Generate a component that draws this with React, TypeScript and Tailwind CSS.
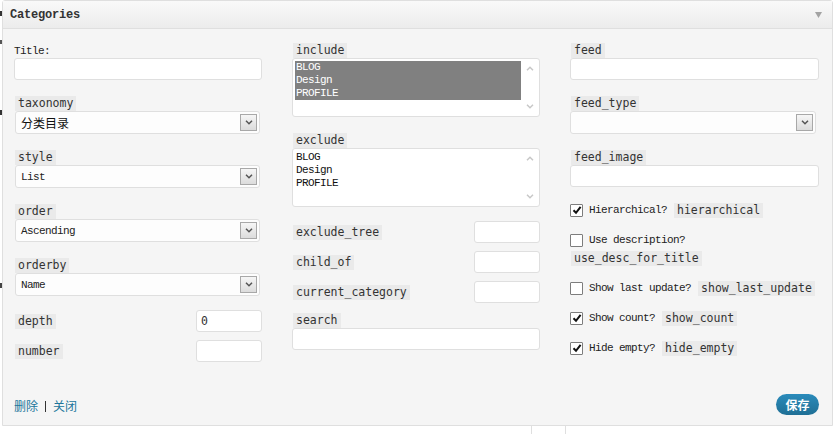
import type { ReactNode } from 'react'

const codeCls =
  "block h-[15px] bg-[#eaeaea] px-[3px] font-['DejaVu_Sans_Mono',monospace] text-[11.5px] leading-[15px] text-[#333]"
const simCls = "font-['Liberation_Mono',monospace] text-[11px] tracking-[-0.6px] text-[#222]"

function Code({ children }: { children: ReactNode }) {
  return <span className={codeCls}>{children}</span>
}

function Label({ children, mt = '' }: { children: ReactNode; mt?: string }) {
  return (
    <div className={`${mt} ml-[1px] flex h-[15px]`}>
      <Code>{children}</Code>
    </div>
  )
}

function TextInput({ w = 'w-full', value = '' }: { w?: string; value?: string }) {
  return (
    <input
      type="text"
      defaultValue={value}
      className={`${w} h-[22px] rounded-[3px] border border-[#dfdfdf] bg-white px-[4px] font-['DejaVu_Sans_Mono',monospace] text-[11.5px] text-[#333] outline-none`}
    />
  )
}

function Chevron({ up = false, color = '#555' }: { up?: boolean; color?: string }) {
  return (
    <svg width="8" height="5" viewBox="0 0 8 5">
      <path
        d={up ? 'M1 4.2 L4 1.2 L7 4.2' : 'M1 0.8 L4 3.8 L7 0.8'}
        fill="none"
        stroke={color}
        strokeWidth="1.5"
      />
    </svg>
  )
}

function Select({ value, w, cjk = false }: { value: string; w: string; cjk?: boolean }) {
  return (
    <div
      className={`${w} flex h-[23px] items-center justify-between rounded-[3px] border border-[#dfdfdf] bg-[#fdfdfd] pl-[5px] pr-[2px]`}
    >
      <span
        className={
          cjk
            ? "font-['Noto_Sans_CJK_SC',sans-serif] text-[12px] text-[#111]"
            : `${simCls} pt-[2px]`
        }
      >
        {value}
      </span>
      <span className="flex h-[17px] w-[17px] items-center justify-center border border-[#a8a8a8] bg-gradient-to-b from-[#f6f6f6] to-[#dcdcdc]">
        <Chevron />
      </span>
    </div>
  )
}

function MultiSelect({ selected }: { selected: boolean }) {
  const items = ['BLOG', 'Design', 'PROFILE']
  return (
    <div className="flex h-[59px] w-[248px] rounded-[3px] border border-[#dfdfdf] bg-white">
      <div className="flex-1 pl-[2px] pt-[2px]">
        <div className={selected ? 'bg-[#808080] pl-[1px]' : 'pl-[1px]'}>
          {items.map((it) => (
            <div
              key={it}
              className={`h-[13px] leading-[13px] font-['Liberation_Mono',monospace] text-[11px] tracking-[-0.6px] ${selected ? 'text-white' : 'text-[#111]'}`}
            >
              {it}
            </div>
          ))}
        </div>
      </div>
      <div className="flex w-[18px] flex-col items-center justify-between py-[7px]">
        <Chevron up color="#c8c8c8" />
        <Chevron color="#c8c8c8" />
      </div>
    </div>
  )
}

function Checkbox({ checked }: { checked: boolean }) {
  return (
    <span className="flex h-[13px] w-[13px] items-center justify-center rounded-[1px] border border-[#7d7d7d] bg-white">
      {checked && (
        <svg width="10" height="10" viewBox="0 0 10 10">
          <path d="M1.5 5.2 L4 7.8 L8.6 1.8" fill="none" stroke="#111" strokeWidth="2" />
        </svg>
      )}
    </span>
  )
}

function CheckRow({ checked, label, code, mt }: { checked: boolean; label: string; code?: string; mt: string }) {
  return (
    <div className={`${mt} flex h-[16px] items-center`}>
      <Checkbox checked={checked} />
      <span className={`${simCls} ml-[6px]`}>{label}</span>
      {code && (
        <span className="ml-[7px] flex">
          <Code>{code}</Code>
        </span>
      )}
    </div>
  )
}

function InlineRow({ label, mt, value }: { label: string; mt: string; value?: string }) {
  return (
    <div className={`${mt} flex h-[22px] items-center justify-between`}>
      <span className="ml-[1px] flex">
        <Code>{label}</Code>
      </span>
      <TextInput w="w-[66px]" value={value} />
    </div>
  )
}

export default function App() {
  return (
    <div className="h-[434px] w-[839px] overflow-hidden bg-white">
      <div className="flex">
        <div className="relative w-[2px]">
          <div className="absolute left-0 top-[11px] h-[5px] w-[2px] bg-[#333]" />
          <div className="absolute left-0 top-[40px] h-[4px] w-[2px] bg-[#555]" />
          <div className="absolute left-0 top-[110px] h-[5px] w-[2px] bg-[#333]" />
          <div className="absolute left-0 top-[283px] h-[5px] w-[2px] bg-[#444]" />
        </div>

        <div className="h-[426px] w-[831px] rounded-t-[3px] border border-[#dfdfdf] bg-[#f5f5f5]">
          {/* header */}
          <div className="flex h-[28px] items-center justify-between border-b border-[#dfdfdf] bg-gradient-to-b from-[#f9f9f9] to-[#ececec] pl-[7px] pr-[10px]">
            <span className="font-['Liberation_Mono',monospace] text-[12px] font-bold tracking-[-0.2px] text-[#333]">
              Categories
            </span>
            <svg width="7" height="6" viewBox="0 0 7 6">
              <path d="M0 0 L7 0 L3.5 6 Z" fill="#a3a3a3" />
            </svg>
          </div>

          {/* fields */}
          <div className="grid grid-cols-[248px_248px_249px] gap-x-[30px] pl-[11px] pt-[13px]">
            {/* column 1 */}
            <div className="flex flex-col">
              <div className={`${simCls} h-[16px] leading-[18px]`}>Title:</div>
              <TextInput />
              <Label mt="mt-[16px]">taxonomy</Label>
              <Select value="分类目录" w="w-[245px] ml-[1px]" cjk />
              <Label mt="mt-[16px]">style</Label>
              <Select value="List" w="w-[245px] ml-[1px]" />
              <Label mt="mt-[16px]">order</Label>
              <Select value="Ascending" w="w-[245px] ml-[1px]" />
              <Label mt="mt-[16px]">orderby</Label>
              <Select value="Name" w="w-[245px] ml-[1px]" />
              <InlineRow label="depth" mt="mt-[14px]" value="0" />
              <InlineRow label="number" mt="mt-[8px]" />
            </div>

            {/* column 2 */}
            <div className="flex flex-col">
              <Label mt="mt-[1px]">include</Label>
              <MultiSelect selected />
              <Label mt="mt-[16px]">exclude</Label>
              <MultiSelect selected={false} />
              <InlineRow label="exclude_tree" mt="mt-[14px]" />
              <InlineRow label="child_of" mt="mt-[8px]" />
              <InlineRow label="current_category" mt="mt-[8px]" />
              <Label mt="mt-[10px]">search</Label>
              <TextInput />
            </div>

            {/* column 3 */}
            <div className="flex flex-col">
              <Label mt="mt-[1px]">feed</Label>
              <TextInput />
              <Label mt="mt-[16px]">feed_type</Label>
              <Select value="" w="w-[246px]" />
              <Label mt="mt-[16px]">feed_image</Label>
              <TextInput />
              <CheckRow checked label="Hierarchical?" code="hierarchical" mt="mt-[15px]" />
              <CheckRow checked={false} label="Use description?" mt="mt-[14px]" />
              <Label mt="mt-[3px]">use_desc_for_title</Label>
              <CheckRow checked={false} label="Show last update?" code="show_last_update" mt="mt-[14px]" />
              <CheckRow checked label="Show count?" code="show_count" mt="mt-[14px]" />
              <CheckRow checked label="Hide empty?" code="hide_empty" mt="mt-[14px]" />
            </div>
          </div>

          {/* footer */}
          <div className="mt-[32px] flex h-[21px] items-center justify-between pl-[11px] pr-[13px]">
            <div className="flex items-center pt-[3px] font-['Noto_Sans_CJK_SC',sans-serif] text-[12px] text-[#21759b]">
              <span>删除</span>
              <span className="mx-[7px] h-[11px] w-px bg-[#333]" />
              <span>关闭</span>
            </div>
            <button className="h-[21px] w-[43px] rounded-full bg-gradient-to-b from-[#2a8bbb] to-[#1f6f95] font-['Noto_Sans_CJK_SC',sans-serif] text-[12px] font-bold text-white">
              保存
            </button>
          </div>
        </div>
      </div>

      <div className="ml-[531px] h-[8px] w-[35px] border-x border-[#dfdfdf]" />
    </div>
  )
}
